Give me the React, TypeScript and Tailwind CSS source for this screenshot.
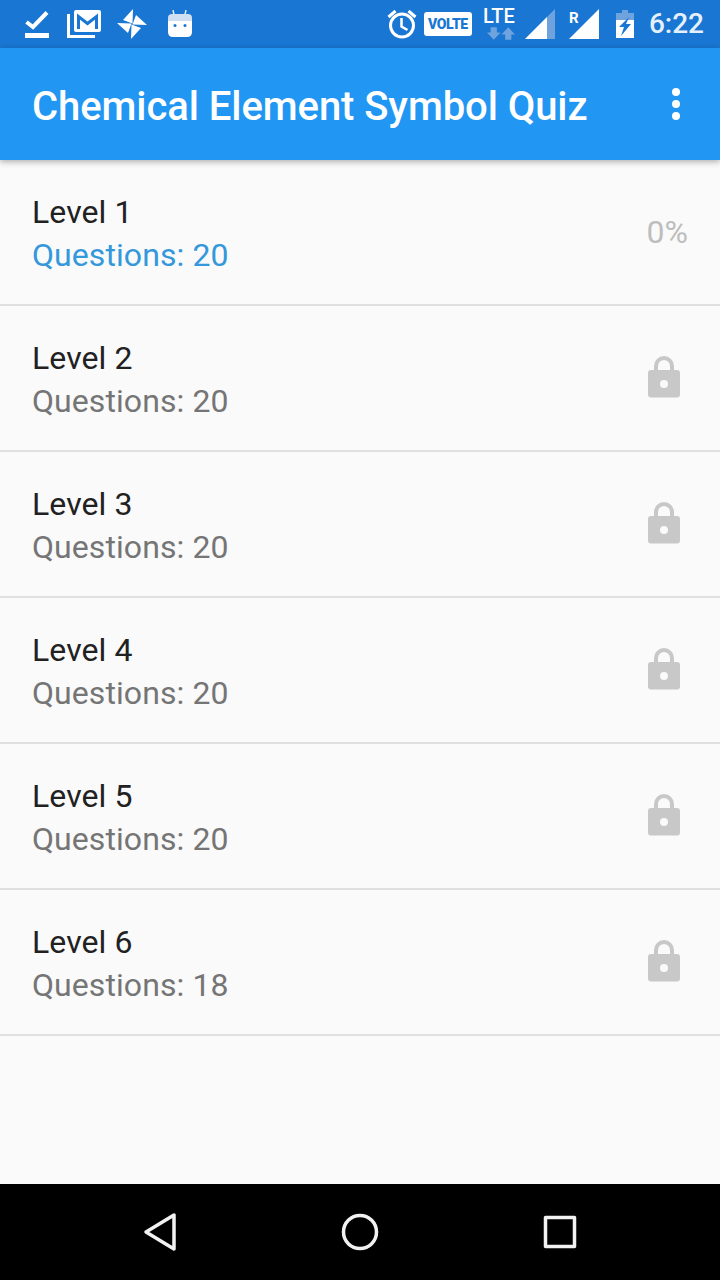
const levels = [
  { name: 'Level 1', questions: 20, open: true },
  { name: 'Level 2', questions: 20 },
  { name: 'Level 3', questions: 20 },
  { name: 'Level 4', questions: 20 },
  { name: 'Level 5', questions: 20 },
  { name: 'Level 6', questions: 18 },
];

function StatusBar() {
  return (
    <div className="h-12 bg-[#1976d2] flex items-center text-white">
      <svg width="24" height="28" viewBox="0 0 24 28" className="ml-[25px]" fill="none">
        <path d="M1.500 12L8 17 22 2.500" stroke="#fff" strokeWidth="4" />
        <rect x="0" y="23" width="24" height="5" fill="#fff" />
      </svg>
      <svg width="35" height="28" viewBox="0 0 35 28" className="ml-[18px]" fill="none">
        <path d="M1.500 4v22.500H28" stroke="#fff" strokeWidth="3" />
        <rect x="7" y="0" width="27" height="22" rx="2" fill="#fff" />
        <path d="M11.500 19V6.500l9 7 9-7V19" stroke="#1976d2" strokeWidth="3" />
      </svg>
      <svg width="30" height="30" viewBox="0 0 30 30" className="ml-[15px]" fill="#fff">
        <path d="M16 0L6 11l9.500 3.500z" />
        <path d="M16 0L6 11l9.500 3.500z" transform="rotate(90 15 15)" />
        <path d="M16 0L6 11l9.500 3.500z" transform="rotate(180 15 15)" />
        <path d="M16 0L6 11l9.500 3.500z" transform="rotate(270 15 15)" />
      </svg>
      <svg width="24" height="27" viewBox="0 0 24 27" className="ml-[21px] mb-[2px]" fill="#fff">
        <path d="M5 0l1.500 7M18 0l-1.500 7" stroke="#dfeaf6" strokeWidth="1.500" />
        <path d="M0 8q0-4 4-4h16q4 0 4 4v4H0z" fill="#cfe0f3" />
        <path d="M0 11h24v11q0 5-5 5H5q-5 0-5-5z" />
        <circle cx="7" cy="15.500" r="1.500" fill="#1976d2" />
        <circle cx="17" cy="15.500" r="1.500" fill="#1976d2" />
      </svg>
      <div className="flex-1" />
      <svg width="30" height="30" viewBox="0 0 30 30" fill="none" stroke="#fff">
        <circle cx="15" cy="16.500" r="11.500" strokeWidth="3" />
        <path d="M14.500 9v8.500l6 3.500" strokeWidth="2.500" />
        <path d="M1.500 8l7-6M28.500 8l-7-6" strokeWidth="3" />
      </svg>
      <div className="ml-[7px] w-[48px] h-[24px] rounded-[3px] bg-white text-[#1976d2] font-['Roboto',sans-serif] font-black text-[14px] leading-[24px] text-center tracking-tight">
        VOLTE
      </div>
      <div className="ml-[9px] w-[36px] flex flex-col items-start">
        <span className="ml-[2px] font-['Roboto',sans-serif] font-medium text-[20px] leading-[21px] mt-[-3px]">LTE</span>
        <svg width="28" height="13" viewBox="0 0 27 12" fill="#6ea3dd" className="ml-[6px]">
          <path d="M3.500 0h6v5h3.500l-6.500 7L0 5h3.500zM20.500 0l6.500 7h-3.500v5h-6V7H14z" />
        </svg>
      </div>
      <svg width="30" height="30" viewBox="0 0 30 30" className="ml-[8px]">
        <path d="M0 30L30 0v30z" fill="#6ea3dd" />
        <path d="M0 30l22-22v22z" fill="#fff" />
      </svg>
      <div className="ml-[14px] w-[30px] h-[30px] relative">
        <span className="absolute left-0 top-[0px] font-['Roboto',sans-serif] font-bold text-[15px] leading-[18px] text-white">R</span>
        <svg width="30" height="30" viewBox="0 0 30 30" className="absolute inset-0">
          <path d="M0 30L30 0v30z" fill="#fff" />
        </svg>
      </div>
      <svg width="18" height="28" viewBox="0 0 18 28" className="ml-[17px]">
        <path d="M6 0h6v3h6v8H0V3h6z" fill="#6ea3dd" />
        <path d="M0 10h18v18H0z" fill="#fff" />
        <path d="M13 7L3 17h5l-3 9 10-12h-5z" fill="#1976d2" />
      </svg>
      <span className="ml-[15px] mr-4 font-['Roboto',sans-serif] text-[28px] font-medium leading-none text-[#e6f0fa]">6:22</span>
    </div>
  );
}

function Lock() {
  return (
    <svg width="34" height="42" viewBox="0 0 34 42" fill="none" className="mr-[7px] mb-[2px]">
      <path d="M9 20V10a8 8 0 0 1 16 0v10" stroke="#c8c8c8" strokeWidth="4" />
      <rect x="1" y="14" width="32" height="27.500" rx="3" fill="#c8c8c8" />
      <circle cx="17" cy="28" r="4" fill="#fafafa" />
    </svg>
  );
}

export default function App() {
  return (
    <div className="w-[720px] h-[1280px] flex flex-col bg-[#fafafa] font-['Roboto',sans-serif] overflow-hidden">
      <StatusBar />
      <header className="h-[112px] bg-[#2196f3] flex items-center pl-8 pr-10 shadow-[0_2px_6px_rgba(0,0,0,0.3)] relative">
        <h1 className="flex-1 pt-[6px] text-white text-[40px] tracking-[-0.07px] font-medium">Chemical Element Symbol Quiz</h1>
        <svg width="8" height="32" viewBox="0 0 8 32" fill="#fff">
          <circle cx="4" cy="4" r="4" />
          <circle cx="4" cy="16" r="4" />
          <circle cx="4" cy="28" r="4" />
        </svg>
      </header>
      <main className="flex-1">
        {levels.map((level) => (
          <div key={level.name} className="h-[146px] border-b-2 border-[#e0e0e0] flex items-center pl-8 pr-8">
            <div className="flex-1 pt-1 tracking-[0.08px]">
              <div className="text-[32px] leading-[43px] text-[#212121]">{level.name}</div>
              <div className={`text-[32px] leading-[43px] ${level.open ? 'text-[#3498db]' : 'text-[#757575]'}`}>
                Questions: {level.questions}
              </div>
            </div>
            {level.open ? <span className="text-[32px] text-[#bdbdbd]">0%</span> : <Lock />}
          </div>
        ))}
      </main>
      <nav className="h-24 bg-black flex items-center justify-around px-[60px]">
        <svg width="48" height="48" viewBox="0 0 48 48" fill="none" stroke="#f2f2f2" strokeWidth="3.500" strokeLinejoin="round">
          <path d="M10 24L38 7v34z" />
        </svg>
        <svg width="48" height="48" viewBox="0 0 48 48" fill="none" stroke="#f2f2f2" strokeWidth="3.500">
          <circle cx="24" cy="24" r="16.500" />
        </svg>
        <svg width="48" height="48" viewBox="0 0 48 48" fill="none" stroke="#f2f2f2" strokeWidth="3.500" strokeLinejoin="round">
          <rect x="9.500" y="9.500" width="29" height="29" />
        </svg>
      </nav>
    </div>
  );
}
